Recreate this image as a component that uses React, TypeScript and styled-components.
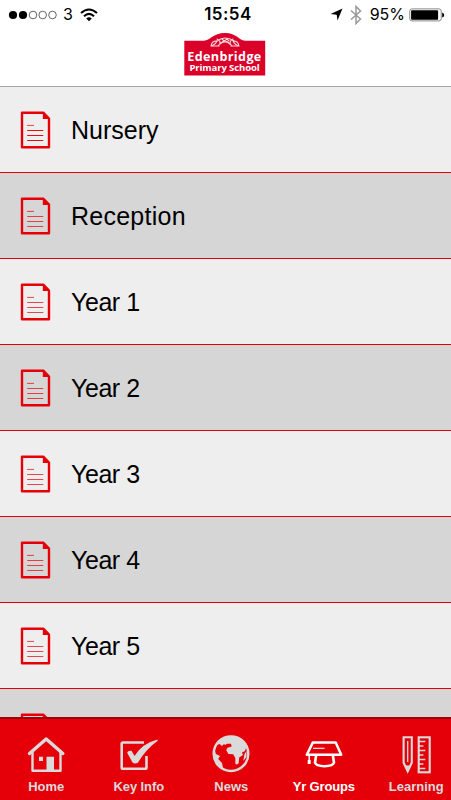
import React from "react";
import styled, { createGlobalStyle } from "styled-components";

const RED = "#e50009";

const GlobalStyle = createGlobalStyle`
  * { box-sizing: border-box; }
  body { margin: 0; background: #fff; font-family: "Liberation Sans", Arial, sans-serif; color: #000; }
`;

const Screen = styled.div`
  display: flex;
  flex-direction: column;
  width: 451px;
  height: 800px;
  overflow: hidden;
  background: #fff;
`;

const StatusBar = styled.div`
  display: grid;
  grid-template-columns: 1fr 60px 1fr;
  align-items: center;
  flex: none;
  height: 29px;
  padding: 0 6px 0 8px;
`;

const StatusGroup = styled.div<{ $end?: boolean }>`
  display: flex;
  align-items: center;
  justify-content: ${(p) => (p.$end ? "flex-end" : "flex-start")};
  height: 29px;
  svg { display: block; flex: none; }
`;

const StatusText = styled.span<{ $gapLeft: number; $gapRight: number }>`
  font: 16px/29px Inter, sans-serif;
  margin: 0 ${(p) => p.$gapRight}px 0 ${(p) => p.$gapLeft}px;
`;

const Clock = styled.div`
  text-align: center;
  font: 600 17px/29px Inter, sans-serif;
  letter-spacing: 0.45px;
  padding-left: 3px;
  white-space: nowrap;
`;

const Header = styled.header`
  display: flex;
  justify-content: center;
  flex: none;
  height: 58px;
  padding: 4px 2px 0 0;
  border-bottom: 1px solid #a5a5a5;
`;

const List = styled.main`
  flex: 1;
  min-height: 0;
  overflow: hidden;
`;

const Row = styled.div<{ $shaded: boolean }>`
  display: flex;
  align-items: center;
  height: 86px;
  padding: 0 20px;
  gap: 20px;
  background: ${(p) => (p.$shaded ? "#d6d6d6" : "#eeeeee")};
  border-bottom: 1px solid ${RED};
  svg { flex: none; }
`;

const RowTitle = styled.span<{ $spacing: number }>`
  font-size: 25px;
  line-height: 30px;
  padding-top: 1px;
  letter-spacing: ${(p) => p.$spacing}px;
`;

const TabBar = styled.nav`
  display: flex;
  flex: none;
  height: 83px;
  overflow: hidden;
  background: ${RED};
  border-top: 2px solid #a0000a;
`;

const Tab = styled.div<{ $active?: boolean }>`
  display: flex;
  flex: none;
  flex-direction: column;
  align-items: center;
  width: 92.5px;
  padding-top: 15px;
  color: ${(p) => (p.$active ? "#fff" : "#dadada")};
`;

const TabLabel = styled.span<{ $spacing?: number }>`
  font-size: 13px;
  font-weight: 700;
  line-height: 16px;
  margin-top: 5px;
  white-space: nowrap;
  letter-spacing: ${(p) => p.$spacing ?? 0}px;
`;

const SignalIcon = () => (
  <svg width="50" height="12" viewBox="0 0 50 12">
    {[5, 15, 25, 34.7, 44.5].map((x, i) => (
      <circle key={x} cx={x} cy="6" r={i < 2 ? 4.1 : 3.8} fill={i < 2 ? "#000" : "none"} stroke={i < 2 ? "none" : "#333"} strokeWidth=".75" />
    ))}
  </svg>
);

const WifiIcon = () => (
  <svg width="18" height="14" viewBox="0 0 18 14">
    <path d="M1 5Q9-2 17 5M4 8.2Q9 3.7 14 8.2" fill="none" stroke="#000" strokeWidth="2.1" />
    <path d="M6.2 10.5Q9 8.2 11.8 10.5L9 13.2Z" />
  </svg>
);

const LocationIcon = () => (
  <svg width="13" height="13" viewBox="0 0 13 13">
    <path d="M12.5.4 7.5 12.4 6.7 6.7.6 6Z" />
  </svg>
);

const BluetoothIcon = () => (
  <svg width="12" height="20" viewBox="0 0 12 20">
    <path d="M1 5.5 10.5 14 6 18.5V1.5L10.5 6 1 14.5" fill="none" stroke="#999" strokeWidth="1.5" />
  </svg>
);

const BatteryIcon = () => (
  <svg width="36" height="14" viewBox="0 0 36 14">
    <rect x=".75" y=".9" width="31.5" height="12" rx="2.2" fill="#fff" stroke="#888" strokeWidth="1" />
    <rect x="2.1" y="2.2" width="27" height="9.5" rx=".8" />
    <path d="M33.2 4.5Q35.2 5 35.2 7T33.2 9.5Z" />
  </svg>
);

const LogoBox = styled.div`
  display: grid;
  width: 82px;
  height: 46px;
  > * { grid-area: 1 / 1; }
`;

const LogoWords = styled.div`
  display: flex;
  flex-direction: column;
  align-items: center;
  padding-top: 16.5px;
  color: #fff;
  white-space: nowrap;
`;

const LogoName = styled.span`
  font: 700 12.6px/13px "Open Sans", sans-serif;
  letter-spacing: 0.35px;
`;

const LogoKind = styled.span`
  font: 700 9.5px/10px "Open Sans", sans-serif;
  letter-spacing: -0.1px;
`;

const SchoolLogo = () => (
  <LogoBox>
    <svg width="82" height="46" viewBox="0 0 82 46">
      <path d="M.3 7.7H20C26 7.7 29 0 41 0S55 7.7 61 7.7H81.2V42.5H.3Z" fill="#db0029" />
      <g fill="none" stroke="#fff" strokeWidth="1.1" opacity=".85" strokeLinecap="round">
        <path d="M27 13Q28 7.5 33 8Q31 12 27 13M55 13Q54 7.5 49 8Q51 12 55 13" />
        <path d="M33 8Q41 2 50 8M33 6Q37 8 36 11Q41 5 46 11Q46 7 49 6" />
        <path d="M34 13Q37 9 41 9Q45 9 48 13M28 13H35M47 13H54M38 6L40 8L43 6L45 8" />
      </g>
    </svg>
    <LogoWords>
      <LogoName>Edenbridge</LogoName>
      <LogoKind>Primary School</LogoKind>
    </LogoWords>
  </LogoBox>
);

const DocumentIcon = ({ first }: { first: boolean }) => (
  <svg width="31" height="38" viewBox="0 0 31 38">
    <path d="M2 1.8H23.5L29 7.5V36.2H2Z" fill="none" stroke={RED} strokeWidth="2.4" strokeLinejoin="round" />
    <path d="M22.8 1.5V8H29.3Z" fill={RED} />
    <path d="M7 14.4H14" stroke={RED} strokeWidth="1" opacity=".7" />
    <path d="M7.2 19.5H23.3M7.2 24.5H23.3M7.2 29.5H23.3" stroke={RED} strokeWidth="1" opacity={first ? 0.95 : 0.7} />
  </svg>
);

const HomeIcon = () => (
  <svg width="40" height="40" viewBox="0 0 40 40" fill="none" stroke="currentColor">
    <path d="M3.5 19.5 20.2 5 36.8 19.5" strokeWidth="3.4" strokeLinecap="round" strokeLinejoin="round" />
    <path d="M6.5 17.5V36.7H34.5V17.5" strokeWidth="2.4" strokeLinejoin="round" />
    <path d="M20.5 22.8H28V36.5H20.5ZM13 22.8H17V27H13Z" fill="currentColor" stroke="none" />
  </svg>
);

const CheckIcon = () => (
  <svg width="40" height="40" viewBox="0 0 40 40" fill="none" stroke="currentColor">
    <path d="M25 8.5H4Q2.7 8.5 2.7 10V33.5Q2.7 34.8 4 34.8H26Q27.5 34.8 27.5 33.5V22" strokeWidth="2.6" />
    <path d="M8.2 18.8Q8.5 16.5 12.5 16.8L15.5 22Q23 9.5 38.5 5.5V7Q27.5 14.5 19 28.5Q16 30.5 13.5 28.5Z" fill="currentColor" stroke="none" />
  </svg>
);

const GlobeIcon = () => (
  <svg width="40" height="40" viewBox="0 0 40 40">
    <circle cx="20" cy="19.7" r="17.3" fill={RED} stroke="currentColor" strokeWidth="2.5" />
    <path d="M6 11C9 5 14 2.2 20 2.3C27 2.3 33 6.5 35.7 12L34 17L31 18.5L32 21L28.2 23.5L27.7 29Q26 31.5 24.3 29.5V24L22.2 20.2L17.5 20L15.2 16.2L16.5 13.8L20.7 12.5L20 9.8L16 9.7L14.2 11L13 10L11 12L8.5 10Z" fill="currentColor" />
    <path d="M3.5 16 5 20 9 22 7.2 25 11 29 12 34 16 37Q5 33 3.5 25Z" fill="currentColor" />
    <path d="M33.5 20 35.5 17V23L32.2 27Z" fill="currentColor" />
  </svg>
);

const CapIcon = () => (
  <svg width="40" height="40" viewBox="0 0 40 40" fill="none" stroke="currentColor">
    <path d="M8.8 8.6H31.7L37.2 20.7H2.8Z" strokeWidth="2.5" strokeLinejoin="round" />
    <path d="M12.2 21 11 28.5Q12 32 20.5 32.3Q29 32 30 28.5L28.8 21" strokeWidth="2.6" />
    <path d="M9 14.3H20.5" strokeWidth="1.1" />
    <path d="M5.2 21V26.5" strokeWidth="1.5" />
    <path d="M3.7 26H6.7V30H3.7Z" fill="currentColor" stroke="none" />
  </svg>
);

const LearningIcon = () => (
  <svg width="40" height="40" viewBox="0 0 40 40" fill="none" stroke="currentColor" strokeWidth="2.1">
    <path d="M7.6 3.3H15.8V28.8L11.7 37.3 7.6 28.8Z" />
    <path d="M11.7 7V28" strokeWidth="1.3" />
    <path d="M9.3 31.5H14.1L11.7 38Z" fill="currentColor" stroke="none" />
    <rect x="22.7" y="3.3" width="11" height="35" />
    <path d="M23 7.5H29.3M23 12H27.4M23 16.5H29.3M23 21H27.4M23 25.5H29.3M23 30H27.4M23 34.5H29.3" strokeWidth="1.7" />
  </svg>
);

const rows = [
  { title: "Nursery", spacing: 0 },
  { title: "Reception", spacing: 0.25 },
  ...[1, 2, 3, 4, 5].map((n) => ({ title: `Year ${n}`, spacing: -0.45 })),
];

const tabs = [
  { label: "Home", Icon: HomeIcon },
  { label: "Key Info", Icon: CheckIcon, spacing: -0.1 },
  { label: "News", Icon: GlobeIcon },
  { label: "Yr Groups", Icon: CapIcon, active: true, spacing: -0.15 },
  { label: "Learning", Icon: LearningIcon },
];

export default function App() {
  return (
    <>
      <GlobalStyle />
      <Screen>
        <StatusBar>
          <StatusGroup>
            <SignalIcon />
            <StatusText $gapLeft={5} $gapRight={7}>3</StatusText>
            <WifiIcon />
          </StatusGroup>
          <Clock>15:54</Clock>
          <StatusGroup $end>
            <LocationIcon />
            <StatusText $gapLeft={7} $gapRight={0} aria-hidden />
            <BluetoothIcon />
            <StatusText $gapLeft={8} $gapRight={4}>95%</StatusText>
            <BatteryIcon />
          </StatusGroup>
        </StatusBar>
        <Header>
          <SchoolLogo />
        </Header>
        <List>
          {rows.map(({ title, spacing }, i) => (
            <Row key={title} $shaded={i % 2 === 1}>
              <DocumentIcon first={i === 0} />
              <RowTitle $spacing={spacing}>{title}</RowTitle>
            </Row>
          ))}
          <Row $shaded>
            <DocumentIcon first={false} />
          </Row>
        </List>
        <TabBar>
          {tabs.map(({ label, Icon, active, spacing }) => (
            <Tab key={label} $active={active}>
              <Icon />
              <TabLabel $spacing={spacing}>{label}</TabLabel>
            </Tab>
          ))}
        </TabBar>
      </Screen>
    </>
  );
}
